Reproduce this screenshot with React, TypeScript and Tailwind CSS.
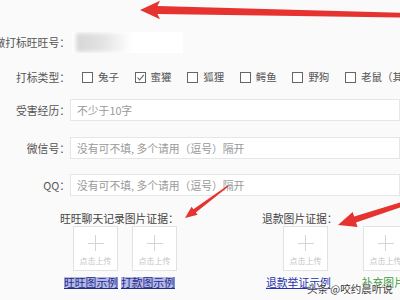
import React from 'react'

const font = { fontFamily: '"Noto Sans CJK SC", "Noto Sans", sans-serif' }

const animals = ['兔子', '蜜獾', '狐狸', '鳄鱼', '野狗', '老鼠（其他）']

const Label: React.FC<{ text: string }> = ({ text }) => (
  <div className="w-[70px] flex justify-end shrink-0 whitespace-nowrap text-[10.8px] text-[#555]">{text}</div>
)

const TextRow: React.FC<{ label: string; placeholder: string; className?: string }> = ({ label, placeholder, className }) => (
  <div className={`flex items-center h-[22px] ${className ?? ''}`}>
    <Label text={label} />
    <div className="flex-1 h-full bg-white border border-[#e6e6e6] flex items-center pl-[6px] text-[10.8px] text-[#999] whitespace-nowrap">
      {placeholder}
    </div>
  </div>
)

const UploadBox: React.FC = () => (
  <div className="w-[45px] h-[45px] bg-white border border-[#e2e2e2] flex flex-col items-center shrink-0">
    <div className="relative w-[16px] h-[16px] mt-[8px]">
      <div className="absolute left-0 right-0 top-[7.5px] h-px bg-[#d4d4d4]" />
      <div className="absolute top-0 bottom-0 left-[7.5px] w-px bg-[#d4d4d4]" />
    </div>
    <div className="mt-[6px] text-[8px] leading-none text-[#c4c4c4] whitespace-nowrap">点击上传</div>
  </div>
)

export default function App() {
  return (
    <div className="relative w-[400px] h-[300px] overflow-hidden bg-[#fafafa]" style={font}>
      <div className="flex flex-col pt-[32px]">
        {/* 旺旺号 */}
        <div className="flex items-center h-[21px]">
          <Label text="做打标旺旺号：" />
          <div className="relative ml-[2px] w-[111px] h-full bg-white overflow-hidden">
            <div className="absolute left-[4px] top-[1px] w-[56px] h-[19px] bg-gradient-to-r from-[#d6d6d6] via-[#e4e4e4] to-transparent blur-[2px]" />
          </div>
        </div>

        {/* 打标类型 */}
        <div className="flex items-center h-[22px] mt-[13px]">
          <Label text="打标类型：" />
          <div className="flex items-center ml-[12px] gap-[15.6px] whitespace-nowrap">
            {animals.map((a, i) => (
              <div key={a} className="flex items-center gap-[5px]">
                <div className="w-[11px] h-[11px] border border-[#666] bg-white flex items-center justify-center">
                  {i === 1 && (
                    <svg width="9" height="9" viewBox="0 0 9 9">
                      <polyline points="1.5,4.5 3.6,6.8 7.8,1.8" fill="none" stroke="#666" strokeWidth="1.1" />
                    </svg>
                  )}
                </div>
                <span className="text-[10.5px] text-[#555]">{a}</span>
              </div>
            ))}
          </div>
        </div>

        <TextRow label="受害经历：" placeholder="不少于10字" className="mt-[11px]" />
        <TextRow label="微信号：" placeholder="没有可不填, 多个请用（逗号）隔开" className="mt-[16px]" />
        <TextRow label="QQ：" placeholder="没有可不填, 多个请用（逗号）隔开" className="mt-[15px]" />

        {/* 图片证据 */}
        <div className="flex mt-[15px] whitespace-nowrap">
          <div className="ml-[60px] w-[202px] shrink-0 flex flex-col">
            <div className="text-[10.8px] leading-[14px] text-[#444]">旺旺聊天记录图片证据：</div>
            <div className="flex gap-[14px] ml-[13px] mt-[1px]">
              <UploadBox />
              <UploadBox />
            </div>
            <div className="flex gap-[3px] ml-[4px] mt-[6px] text-[10.8px] leading-[11px]">
              <span className="bg-[#b3b8e4] text-[#1f2a8c] underline">旺旺图示例</span>
              <span className="bg-[#b3b8e4] text-[#1f2a8c] underline">打款图示例</span>
            </div>
          </div>
          <div className="w-[140px] shrink-0 flex flex-col">
            <div className="text-[10.8px] leading-[14px] text-[#444]">退款图片证据：</div>
            <div className="flex gap-[35px] ml-[21px] mt-[1px]">
              <UploadBox />
              <UploadBox />
            </div>
            <div className="flex gap-[31px] ml-[4px] mt-[6px] text-[10.8px] leading-[11px]">
              <span className="text-[#2633a8] underline">退款举证示例</span>
              <span className="text-[#3f9a3f]">补充图片</span>
            </div>
          </div>
        </div>
      </div>

      {/* watermark */}
      <div
        className="absolute left-[307px] top-[281px] text-[10.5px] text-[#3a3a3a] whitespace-nowrap"
        style={{ textShadow: '0 0 2px #fff, 0 0 2px #fff' }}
      >
        头条 @咬约晨听说
      </div>

      {/* red arrows */}
      <svg className="absolute inset-0 pointer-events-none" width="400" height="300" viewBox="0 0 400 300">
        <polygon points="140,10 160,0.8 157.5,6 400,12.8 400,17.4 157.5,14 160,19.2" fill="#e63330" />
        <polygon points="185,218 191.6,206.8 193.4,209.2 227.6,185.4 228.4,186.6 195.8,212.4 197.6,214.8" fill="#e63330" />
        <polygon points="338,225 352.6,211.9 354.2,216.6 400,202.5 400,207.5 356,222.4 357.6,227.1" fill="#e63330" />
      </svg>
    </div>
  )
}
